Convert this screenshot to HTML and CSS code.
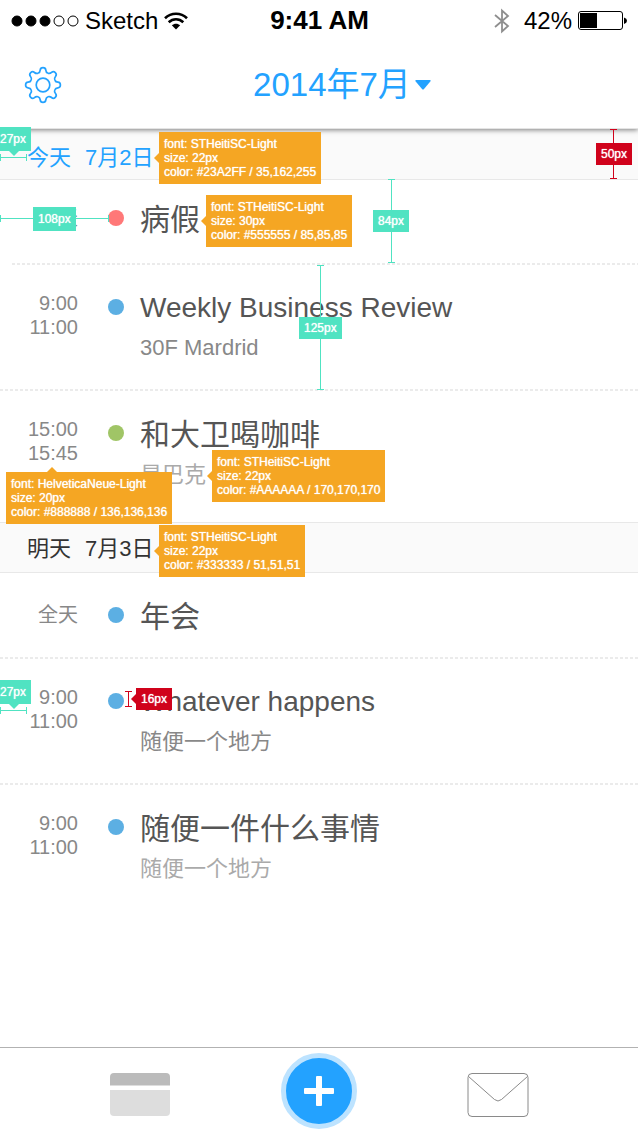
FILE: index.html
```html
<!DOCTYPE html>
<html lang="zh-CN">
<head>
<meta charset="utf-8">
<meta name="viewport" content="width=device-width, initial-scale=1">
<title>2014年7月</title>
<link rel="stylesheet" href="styles.css">
</head>
<body>
<div class="screen">
  <header class="top">
    <div class="status">
      <div class="status-left">
        <svg class="signal" width="68" height="12" viewBox="0 0 68 12"><g stroke="#000"><circle cx="6" cy="6" r="5"/><circle cx="20" cy="6" r="5"/><circle cx="34" cy="6" r="5"/><circle cx="48" cy="6" r="5" fill="none"/><circle cx="62" cy="6" r="5" fill="none"/></g></svg>
        <span>Sketch</span>
        <svg width="24" height="18" viewBox="0 0 24 18" fill="none" stroke="#000" stroke-width="2.6"><path d="M1 6.300C7.200.2 16.800.2 23 6.300M4.700 10.300C8.900 6.300 15.100 6.300 19.300 10.300"/><path d="M7.800 13.300C10.200 11.100 13.800 11.100 16.200 13.300L12 17.500Z" fill="#000" stroke="none"/></svg>
      </div>
      <div class="clock">9:41 AM</div>
      <div class="status-right">
        <svg class="bluetooth" width="16" height="26" viewBox="0 0 16 26" fill="none" stroke="#8e8e8e" stroke-width="1.800"><path d="M1 7L14 18L8 23.500V2.500L14 8L1 19"/></svg>
        <span>42%</span>
        <svg width="50" height="20" viewBox="0 0 50 20"><rect x=".5" y=".5" width="44" height="18" rx="2.500" fill="none" stroke="#000"/><rect x="2" y="2" width="17" height="15"/><path d="M46 6.500Q49 7.500 49 9.700T46 13Z"/></svg>
      </div>
    </div>
    <div class="nav">
      <button class="gear" aria-label="设置">
        <svg width="38" height="38" viewBox="-19 -19 38 38" fill="none" stroke="#23a2ff" stroke-width="1.700">
          <circle r="6.800"/>
          <g id="q"><path id="t" d="M-4.900-11.800C-3.200-12.500-2.900-13.400-2.800-14.900Q-2.600-17.400 0-17.400T2.800-14.900C2.900-13.400 3.200-12.500 4.900-11.800"/><use href="#t" transform="rotate(45)"/></g>
          <use href="#q" transform="rotate(90)"/><use href="#q" transform="rotate(180)"/><use href="#q" transform="rotate(270)"/>
        </svg>
      </button>
      <button class="month">2014年7月<svg width="16" height="10" viewBox="0 0 16 10" fill="#23a2ff"><path d="M1.200 0H14.800Q16.300.2 15.300 1.500L9 9Q8 10 7 9L.7 1.500Q-.3.2 1.200 0Z"/></svg></button>
    </div>
  </header>

  <main class="agenda">
    <h2 class="day today"><span>今天</span><span>7月2日</span></h2>
    <article class="event short sick">
      <div class="time">全天</div><i class="dot red"></i>
      <div class="info"><h3>病假</h3></div>
    </article>
    <article class="event latin">
      <div class="time">9:00<br>11:00</div><i class="dot"></i>
      <div class="info"><h3>Weekly Business Review</h3><p>30F Mardrid</p></div>
    </article>
    <article class="event last">
      <div class="time">15:00<br>15:45</div><i class="dot green"></i>
      <div class="info"><h3>和大卫喝咖啡</h3><p class="pale">星巴克</p></div>
    </article>
    <h2 class="day"><span>明天</span><span>7月3日</span></h2>
    <article class="event short">
      <div class="time">全天</div><i class="dot"></i>
      <div class="info"><h3>年会</h3></div>
    </article>
    <article class="event latin">
      <div class="time">9:00<br>11:00</div><i class="dot"></i>
      <div class="info"><h3>Whatever happens</h3><p>随便一个地方</p></div>
    </article>
    <article class="event last">
      <div class="time">9:00<br>11:00</div><i class="dot"></i>
      <div class="info"><h3>随便一件什么事情</h3><p class="pale">随便一个地方</p></div>
    </article>
  </main>

  <nav class="tabs">
    <button class="tab" aria-label="卡片"><svg width="60" height="43" viewBox="0 0 60 43"><path d="M0 12V4Q0 0 4 0H56Q60 0 60 4V12Z" fill="#bbb"/><path d="M0 12H60V13H0Z" fill="#ddd"/><path d="M0 17H60V39Q60 43 56 43H4Q0 43 0 39Z" fill="#ddd"/></svg></button>
    <button class="add" aria-label="添加"><svg width="30" height="30" viewBox="0 0 30 30" fill="#fff"><rect x="12" y="0" width="6" height="30" rx="1"/><rect x="0" y="12" width="30" height="6" rx="1"/></svg></button>
    <button class="tab" aria-label="邮件"><svg width="62" height="45" viewBox="0 0 62 45" fill="none" stroke="#8a8a8a"><rect x="1" y=".5" width="60" height="43" rx="4"/><path d="M1.500 3.500L27.500 26.500Q31 29.500 34.500 26.500L60.500 3.500"/></svg></button>
  </nav>

  <div class="specs">
    <div class="spec arrow-left s1">font: STHeitiSC-Light<br>size: 22px<br>color: #23A2FF / 35,162,255</div>
    <div class="spec arrow-left s2">font: STHeitiSC-Light<br>size: 30px<br>color: #555555 / 85,85,85</div>
    <div class="spec arrow-left s3">font: STHeitiSC-Light<br>size: 22px<br>color: #AAAAAA / 170,170,170</div>
    <div class="spec arrow-up s4">font: HelveticaNeue-Light<br>size: 20px<br>color: #888888 / 136,136,136</div>
    <div class="spec arrow-left s5">font: STHeitiSC-Light<br>size: 22px<br>color: #333333 / 51,51,51</div>

    <i class="rule across r1"></i><b class="size tall edge arrow-down z1">27px</b>
    <i class="rule across r2"></i><b class="size tall z2">108px</b>
    <i class="rule down r3"></i><b class="size z3">84px</b>
    <i class="rule down r4"></i><b class="size z4">125px</b>
    <i class="rule across r5"></i><b class="size tall edge arrow-down z5">27px</b>
    <i class="rule down crimson r6"></i><b class="size crimson z6">50px</b>
    <i class="rule down crimson r7"></i><b class="size crimson arrow-left z7">16px</b>
  </div>
</div>
</body>
</html>
```
FILE: styles.css
```css
* { box-sizing: border-box; }
body {
  margin: 0;
  background: #fff;
  font-family: "Liberation Sans", "Noto Sans CJK SC", sans-serif;
}
h2, h3, p { margin: 0; font-weight: 400; }
button { border: 0; padding: 0; background: none; font: inherit; color: inherit; }
svg { display: block; }

.screen {
  position: relative;
  display: flex;
  flex-direction: column;
  min-height: 100vh;
  margin-right: 2px;
  overflow-x: clip;
}

/* Status bar and title */
.top {
  position: relative;
  padding-bottom: 21px;
  background: #fff;
  border-bottom: 1px solid #e4e4e4;
  box-shadow: 0 1px 5px rgba(0, 0, 0, .5);
}
.status {
  display: grid;
  grid-template-columns: 1fr auto 1fr;
  align-items: center;
  height: 41px;
  padding: 0 10px 0 11px;
  font-size: 24px;
}
.status-left, .status-right { display: flex; align-items: center; gap: 6px; }
.status-right { justify-content: flex-end; }
.bluetooth { margin-right: 8px; }
.clock { font-size: 26px; font-weight: 700; }
.nav {
  display: grid;
  grid-template-columns: 1fr auto 1fr;
  align-items: center;
  padding: 22px 0 0 24px;
}
.gear { justify-self: start; }
.month {
  display: flex;
  align-items: center;
  gap: 4px;
  margin-right: -22px;
  color: #23a2ff;
  font-size: 33px;
  line-height: 44px;
}

/* Agenda */
.agenda { flex: 1; }
.day {
  display: flex;
  gap: 14px;
  height: 51px;
  padding-left: 27px;
  border-bottom: 1px solid #e8e8e8;
  background: #fafafa;
  color: #333;
  font-size: 22px;
  line-height: 52px;
}
.last + .day { border-top: 1px solid #e8e8e8; }
.today { color: #23a2ff; line-height: 58px; }
.event {
  display: grid;
  grid-template-columns: 78px 16px 1fr;
  column-gap: 30px;
  padding: 22px 0 23px;
  background: repeating-linear-gradient(90deg, #ebebeb 0 3px, transparent 3px 5px) bottom / 100% 2px no-repeat;
}
.last { padding-bottom: 27px; background: none; }
.short { padding: 22px 0; }
.sick { padding: 18px 0 25px; background-position: 12px 100%; }
.time {
  padding-top: 4px;
  color: #888;
  font-size: 20px;
  line-height: 24px;
  text-align: right;
}
.dot {
  width: 16px;
  height: 16px;
  margin-top: 12px;
  border-radius: 50%;
  background: #5cafe3;
}
.red { background: #ff7878; }
.green { background: #a0c566; }
.short .time { padding-top: 8px; }
.info { margin-left: -14px; padding-top: 2px; line-height: 40px; }
.info h3 { color: #555; font-size: 30px; }
.info p { color: #888; font-size: 22px; }
.latin .info { padding-top: 1px; }
.latin h3 { font-size: 28px; }
.info .pale { color: #aaa; }

/* Bottom bar */
.tabs {
  display: grid;
  grid-template-columns: repeat(3, 1fr);
  justify-items: center;
  align-items: start;
  height: 89px;
  padding: 5px 50px 0;
  border-top: 1px solid #b2b2b2;
}
.tab { padding-top: 20px; }
.add {
  display: grid;
  place-items: center;
  width: 76px;
  height: 76px;
  border: 5px solid #bde3ff;
  border-radius: 50%;
  background: #23a2ff;
}

/* Measurement overlay */
.specs { color: #fff; font-size: 12px; line-height: 14px; text-shadow: 0 0 1px #fff; }
.spec, .size, .rule { position: absolute; }
.spec { --tone: #f5a623; padding: 5px; background: var(--tone); white-space: nowrap; }
.size {
  --tone: #50e3c2;
  padding: 0 5px;
  background: var(--tone);
  font-weight: 400;
  line-height: 22px;
}
.tall { line-height: 24px; }
.edge { padding-left: 0; }
.rule { --tone: #50e3c2; }
.crimson { --tone: #d0021b; }

.arrow-left::before, .arrow-up::before, .arrow-down::before {
  content: "";
  position: absolute;
  border: 5px solid transparent;
}
.arrow-left::before { right: 100%; top: calc(50% - 5px); border-right-color: var(--tone); border-left: 0; }
.arrow-up::before { bottom: 100%; left: 41px; border-bottom-color: var(--tone); border-top: 0; }
.arrow-down::before { top: 100%; left: 9px; border-top-color: var(--tone); border-bottom: 0; }

.across {
  height: 7px;
  border: solid var(--tone);
  border-width: 0 1px;
  background: linear-gradient(var(--tone) 0 0) center / 100% 1px no-repeat;
}
.down {
  width: 7px;
  border: solid var(--tone);
  border-width: 1px 0;
  background: linear-gradient(var(--tone) 0 0) center / 1px 100% no-repeat;
}

.s1 { left: 159px; top: 132px; }
.s2 { left: 206px; top: 195px; }
.s3 { left: 212px; top: 450px; }
.s4 { left: 6px; top: 472px; }
.s5 { left: 159px; top: 525px; }
.r1 { left: 0; top: 154px; width: 27px; }
.z1 { left: 0; top: 127px; }
.r2 { left: 0; top: 215px; width: 109px; }
.z2 { left: 33px; top: 207px; }
.r3 { left: 388px; top: 179px; height: 84px; }
.z3 { left: 373px; top: 210px; }
.r4 { left: 317px; top: 265px; height: 125px; }
.z4 { left: 299px; top: 317px; }
.r5 { left: 0; top: 707px; width: 27px; }
.z5 { left: 0; top: 680px; }
.r6 { right: 21px; top: 129px; height: 50px; }
.z6 { right: 6px; top: 143px; }
.r7 { left: 125px; top: 691px; height: 16px; }
.z7 { left: 136px; top: 688px; }
```
